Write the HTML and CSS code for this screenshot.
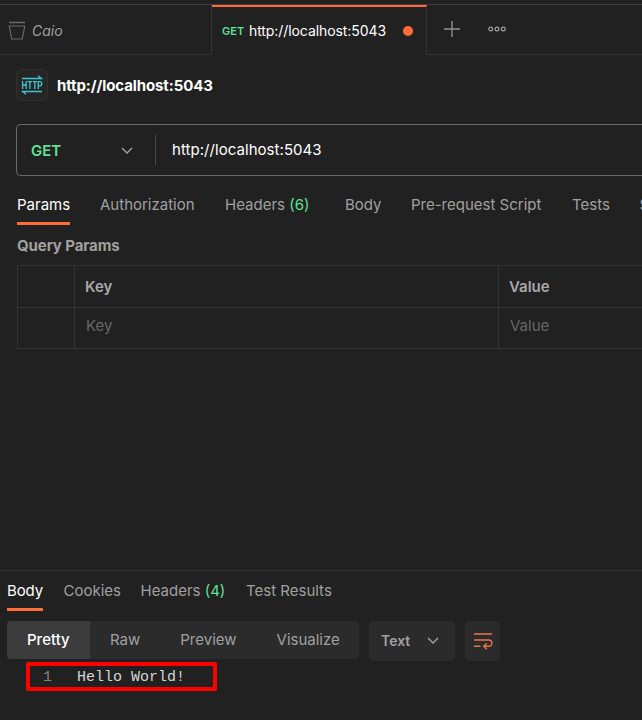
FILE: index.html
```html
<!DOCTYPE html>
<html lang="en">
<head>
<meta charset="utf-8">
<title>http://localhost:5043</title>
<link rel="stylesheet" href="styles.css">
</head>
<body>
<header class="tabbar">
  <div class="file-tab">
    <svg class="trash" width="18" height="20" viewBox="0 0 18 20" fill="none" stroke="#6b6b6b"><path d="M1 1.5H17" stroke-width="1.5"/><path d="M.8 5H17.2M1.2 5L3.8 18H14.2L16.8 5" stroke-width="1.2"/></svg>
    <span class="file-name">Caio</span>
  </div>
  <div class="file-tab active">
    <span class="badge">GET</span><span class="tab-url">http://localhost:5043</span><span class="dot"></span>
  </div>
  <div class="tab-tools">
    <svg width="16" height="16" viewBox="0 0 16 16" stroke="#909090" stroke-width="1.4"><path d="M0 8H16M8 0V16"/></svg>
    <svg width="18" height="6" viewBox="0 0 18 6" fill="none" stroke="#a0a0a0" stroke-width="1.2"><circle cx="2.7" cy="3" r="1.9"/><circle cx="9" cy="3" r="1.9"/><circle cx="15.3" cy="3" r="1.9"/></svg>
  </div>
</header>
<div class="title-row">
  <div class="http-icon">
    <svg width="22" height="20" viewBox="0 0 22 20" fill="none" stroke="#3cc6d4" stroke-width="1.3"><path d="M1 3.5H20.3L17 .7M21 16.5H1.7L5 19.3"/><path d="M1.6 6V14M5.2 6V14M1.6 10H5.2M6.7 6.6H11M8.9 6.6V14M11.7 6.6H16M13.8 6.6V14M17.2 14V6.6H18.8A1.9 2 0 0 1 18.8 10.8H17.2"/></svg>
  </div>
  <h1>http://localhost:5043</h1>
</div>
<div class="request">
  <div class="method"><span>GET</span><svg width="12" height="8" viewBox="0 0 12 8" fill="none" stroke="#a6a6a6" stroke-width="1.3"><path d="M1 1L6 6L11 1"/></svg></div>
  <div class="request-url">http://localhost:5043</div>
</div>
<nav class="request-tabs">
  <span class="selected">Params</span><span>Authorization</span><span>Headers <b>(6)</b></span><span>Body</span><span>Pre-request Script</span><span>Tests</span><span>Settings</span>
</nav>
<main>
  <h2>Query Params</h2>
  <div class="params">
    <div></div><div class="head">Key</div><div class="head">Value</div>
    <div></div><div class="hint">Key</div><div class="hint">Value</div>
  </div>
</main>
<section class="response">
  <nav class="response-tabs">
    <span class="selected">Body</span><span>Cookies</span><span>Headers <b>(4)</b></span><span>Test Results</span>
  </nav>
  <div class="toolbar">
    <div class="views"><span class="current">Pretty</span><span>Raw</span><span>Preview</span><span>Visualize</span></div>
    <div class="format"><span>Text</span><svg width="12" height="8" viewBox="0 0 12 8" fill="none" stroke="#a6a6a6" stroke-width="1.3"><path d="M1 1L6 6L11 1"/></svg></div>
    <div class="wrap"><svg width="20" height="18" viewBox="0 0 20 18" fill="none" stroke="#e8744d" stroke-width="1.4"><path d="M1 2H19M1 8H15.5C20 8 20 14.3 15.5 14.3H11M1 14.3H7.5M13.8 11.2L10.7 14.3L13.8 17.3"/></svg></div>
  </div>
  <div class="output"><span class="line-no">1</span><code>Hello World!</code></div>
</section>
</body>
</html>
```

FILE: styles.css
```css
* { box-sizing: border-box; }
body {
  margin: 0;
  width: 642px;
  height: 720px;
  overflow: hidden;
  display: flex;
  flex-direction: column;
  background: #212121;
  color: #a0a0a0;
  font: 15px/20px Inter, "Liberation Sans", sans-serif;
  white-space: nowrap;
}
svg { display: block; flex: none; }
h1, h2 { margin: 0; font-size: 15px; line-height: 20px; }
h1 { padding-top: 2px; letter-spacing: -.1px; }
h2 { letter-spacing: -.1px; }
b { font-weight: 400; color: #5fe096; }
.tabbar { display: flex; height: 51px; flex: none; margin-top: 4px; border-top: 1px solid #3f3f3f; }
.file-tab {
  display: flex;
  align-items: center;
  width: 212px;
  padding: 2px 0 0 8px;
  border-right: 1px solid #343434;
  border-bottom: 1px solid #343434;
}
.file-name { margin-left: 6px; font-size: 14px; font-style: italic; }
.file-tab.active { width: 215px; padding: 0 0 0 10px; border-top: 2px solid #ff6c37; border-bottom: 0; }
.badge { width: 27px; font-size: 11px; font-weight: 600; color: #5fe096; }
.tab-url { width: 154px; font-size: 14px; letter-spacing: -.08px; color: #fff; }
.dot { width: 10px; height: 10px; border-radius: 50%; background: #ff6c37; }
.tab-tools { display: flex; flex: 1; align-items: center; gap: 28px; padding: 0 0 2px 17px; border-bottom: 1px solid #343434; }
.title-row { display: flex; align-items: center; gap: 9px; height: 32px; margin: 14px 0 0 16px; flex: none; color: #fff; }
.http-icon { display: grid; place-items: center; width: 32px; height: 32px; border: 1px solid #303030; border-radius: 5px; background: #262626; }
.request { display: flex; align-items: center; flex: none; height: 52px; margin: 23px 0 0 16px; border: 1px solid #6b6b6b; border-right: 0; border-radius: 5px 0 0 5px; }
.method { display: flex; align-items: center; justify-content: space-between; width: 139px; height: 30px; padding: 1px 22px 0 14px; border-right: 1px solid #484848; color: #5fe096; font-weight: 600; }
.request-url { padding-left: 16px; letter-spacing: .05px; color: #fff; }
.request-tabs, .response-tabs { display: grid; flex: none; }
.request-tabs { grid-template-columns: 83px 125px 120px 66px 161px 67.5px 2.5px; height: 30px; margin: 19px 0 0 17px; overflow: hidden; }
.request-tabs span, .response-tabs span { justify-self: start; }
.selected { color: #fff; border-bottom: 3px solid #ff6c37; }
main { margin: 11px 0 0 17px; }
.params { display: grid; grid-template-columns: 57px 424px 1fr; grid-template-rows: 42px 41px; margin-top: 9px; border-top: 1px solid #343434; border-left: 1px solid #343434; }
.params div { border-right: 1px solid #343434; border-bottom: 1px solid #343434; padding: 11px 0 0 10px; }
.params div:nth-child(3n) { border-right: 0; }
.params .head { font-weight: 600; color: #a8a8a8; }
.params .hint { padding: 8px 0 0 11px; color: #666; }
.response { margin-top: auto; height: 150px; border-top: 1px solid #343434; }
.response-tabs { grid-template-columns: 56.5px 77px 105.5px 100px; height: 30px; margin: 10px 0 0 7px; }
.response-tabs .selected { letter-spacing: -.1px; }
.toolbar { display: flex; align-items: flex-start; margin: 10px 0 0 7px; }
.views { display: flex; width: 352px; height: 38px; border-radius: 4px; overflow: hidden; background: #2b2b2b; line-height: 38px; }
.views span { flex: none; padding-right: 40px; }
.views .current { width: 83px; padding: 0 0 0 20px; margin-right: 20px; background: #3c3c3c; color: #fff; font-weight: 500; }
.format, .wrap { display: flex; align-items: center; height: 40px; border-radius: 4px; background: #2b2b2b; }
.format { width: 86px; margin-left: 10px; padding: 0 16px 0 12px; justify-content: space-between; font-size: 14px; font-weight: 600; }
.wrap { width: 35px; margin-left: 10px; justify-content: center; }
.output { display: flex; align-items: center; width: 191px; height: 29px; margin: 1px 0 0 26px; border: 4px solid #f00; border-radius: 2px; padding: 3px 0 0 13px; font: 15px/20px "Liberation Mono", monospace; color: #d4d4d4; }
.line-no { width: 34px; color: #858585; }
code { font: inherit; }
```
